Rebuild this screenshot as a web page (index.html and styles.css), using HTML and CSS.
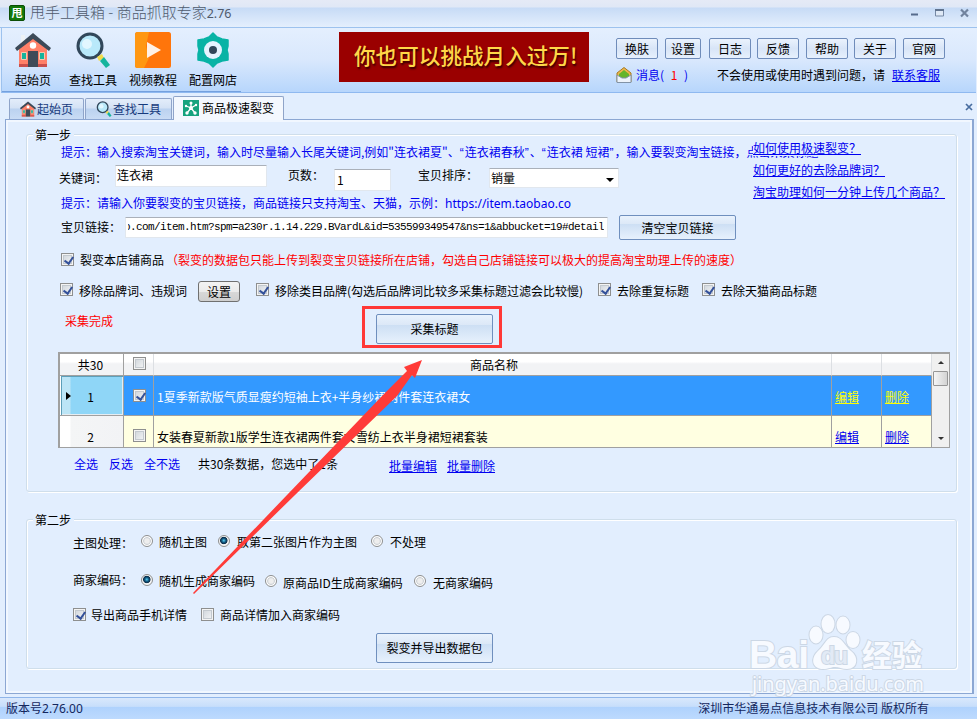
FILE: index.html
```html
<!DOCTYPE html>
<html lang="zh-CN">
<head>
    <meta charset="UTF-8">
    <title>甩手工具箱 - 商品抓取专家2.76</title>
    <link rel="stylesheet" href="styles.css">
</head>
<body>
    <!-- Iconos compartidos -->
    <svg class="defs">
        <symbol id="home" viewBox="0 0 36 36">
            <path d="M6 3h4v8H6z" fill="#eef2f5"/>
            <path d="M4 17 18 4l14 13v18H4z" fill="#ff8068"/>
            <path d="M18 1 0 16l2 3L18 7l16 12 2-3z" fill="#3c4a58"/>
            <circle cx="18" cy="13.500" r="3.200" fill="#fff"/>
            <path d="M13 19h10v16H13z" fill="#3f4b58"/>
            <path d="M6.500 20.500h5v7h-5zM24.500 20.500h5v7h-5z" fill="#15b39c" stroke="#f4c8ae"/>
            <path d="M4 32h9v3H4zM23 32h9v3h-9z" fill="#c94f4c"/>
        </symbol>
        <symbol id="search" viewBox="0 0 36 36">
            <circle cx="15" cy="14" r="12" fill="#b9e9fa" stroke="#31475a" stroke-width="3"/>
            <circle cx="12" cy="12" r="5" fill="#e2f7ff"/>
            <path d="m22 25 5-3 2 4-5 3z" fill="#f3dc4b"/>
            <path d="m25 29 4-4 6 8-4 3z" fill="#16b49e"/>
        </symbol>
    </svg>

    <div class="titlebar">
        <span class="logo">甩</span>
        <span class="title">甩手工具箱 - 商品抓取专家<small>2.76</small></span>
        <svg class="win-buttons" viewBox="0 0 60 12" width="60" height="12">
            <path d="M0 7.500h7" stroke="#566b8c" stroke-width="2"/>
            <path d="M24.500 3h8v6h-8z" fill="#dfe9f6" stroke="#7689a5"/>
            <path d="M24 3h9" stroke="#61748f" stroke-width="2"/>
            <path d="m50 2.500 7 7m0-7-7 7" stroke="#71839e" stroke-width="2.200"/>
        </svg>
    </div>

    <div class="header">
        <div class="tools">
            <div class="tool"><svg width="36" height="36"><use href="#home"/></svg><span>起始页</span></div>
            <div class="tool"><svg width="36" height="36"><use href="#search"/></svg><span>查找工具</span></div>
            <div class="tool">
                <svg viewBox="0 0 36 36" width="36" height="36">
                    <rect width="36" height="36" rx="2.500" fill="#ff750b"/>
                    <path d="M2.500 0H14l-3 14 3 12-5 10H2.500Q0 36 0 33V3Q0 0 2.500 0z" fill="#ff9712"/>
                    <path d="m12 10 14 8-14 8z" fill="#fff1e6"/>
                </svg><span>视频教程</span>
            </div>
            <div class="tool">
                <svg viewBox="0 0 36 36" width="36" height="36">
                    <path d="M18 1 22 5 27 7 33 8 33 14 32 18 33 22 33 28 27 29 22 31 18 35 14 31 9 29 3 28 3 22 4 18 3 14 3 8 9 7 14 5z" fill="#08b3a5" stroke="#08b3a5" stroke-width="1.500" stroke-linejoin="round"/>
                    <circle cx="18" cy="18" r="9" fill="#e5f3ff"/>
                    <circle cx="18" cy="18" r="4" fill="#31475a"/>
                </svg><span>配置网店</span>
            </div>
        </div>
        <div class="banner">你也可以挑战月入过万!</div>
        <div class="header-right">
            <div class="menu">
                <button>换肤</button><button class="narrow">设置</button><button>日志</button><button>反馈</button><button>帮助</button><button>关于</button><button>官网</button>
            </div>
            <div class="messages">
                <svg viewBox="0 0 16 16" width="16" height="16">
                    <path d="M8 .5 15 6v9H1V6z" fill="#efb64b" stroke="#a47b24"/>
                    <path d="M8 3 3 7v4h10V7z" fill="#64b52a"/>
                    <path d="m1 8 5 3h4l5-3v7.500H1z" fill="#edf3fa" stroke="#8293a6"/>
                </svg>
                <span class="msg">消息( <i>1</i> )</span>
                <span class="help">不会使用或使用时遇到问题，请</span>
                <a href="#">联系客服</a>
            </div>
        </div>
    </div>

    <div class="tabs">
        <div class="tab"><svg width="16" height="16"><use href="#home"/></svg>起始页</div>
        <div class="tab second"><svg width="16" height="16"><use href="#search"/></svg>查找工具</div>
        <div class="tab active">
            <svg viewBox="0 0 16 16" width="16" height="16">
                <rect width="16" height="16" fill="#16a37d"/>
                <path d="M8 8V3M8 8 3 6m5 2 5-3M8 8l-4 5m4-5 4 5" stroke="#fff" stroke-width="1.300"/>
                <g fill="#fff"><circle cx="8" cy="8" r="2"/><circle cx="8" cy="3" r="1.500"/><circle cx="3" cy="6" r="1.200"/><circle cx="13" cy="5" r="1.200"/><circle cx="4" cy="13" r="1.700"/><circle cx="12" cy="13" r="1.700"/></g>
            </svg>商品极速裂变
        </div>
        <svg class="tab-close" viewBox="0 0 8 8" width="8" height="8"><path d="m1 1 6 6m0-6L1 7" stroke="#486d9f" stroke-width="1.700"/></svg>
    </div>

    <div class="panel">
        <div class="group step1">
            <div class="legend">第一步</div>
            <div class="tip tip1">提示：输入搜索淘宝关键词，输入时尽量输入长尾关键词,例如"连衣裙夏"、<q>“</q>连衣裙春秋<q>”</q>、<q>“</q>连衣裙 短裙<q>”</q>，输入要裂变淘宝链接，点击采集标题</div>
            <div class="row keyword">
                <label>关键词：</label><input class="kw" value="连衣裙">
                <label>页数：</label><input class="pages" value="1">
                <label>宝贝排序：</label><div class="select">销量<b></b></div>
            </div>
            <div class="tip">提示：请输入你要裂变的宝贝链接，商品链接只支持淘宝、天猫，示例：<span class="url">https://item.taobao.co</span></div>
            <div class="row link">
                <label>宝贝链接：</label>
                <div class="link-input"><span>o.com/item.htm?spm=a230r.1.14.229.BVardL&amp;id=535599349547&amp;ns=1&amp;abbucket=19#detail</span></div>
                <button class="btn">清空宝贝链接</button>
            </div>
            <div class="row shop">
                <i class="check on"></i><span>裂变本店铺商品</span>
                <span class="red">（裂变的数据包只能上传到裂变宝贝链接所在店铺，勾选自己店铺链接可以极大的提高淘宝助理上传的速度）</span>
            </div>
            <div class="row filters">
                <i class="check on"></i><span>移除品牌词、违规词</span><button class="gray">设置</button>
                <i class="check on"></i><span>移除类目品牌(勾选后品牌词比较多采集标题过滤会比较慢)</span>
                <i class="check on"></i><span>去除重复标题</span>
                <i class="check on"></i><span>去除天猫商品标题</span>
            </div>
            <div class="row collect">
                <span class="red">采集完成</span>
                <div class="highlight"><button class="btn">采集标题</button></div>
            </div>
            <div class="grid">
                <div class="cells">
                    <div class="tr head"><div class="num">共30</div><div><i class="check"></i></div><div class="name">商品名称</div><div></div><div></div></div>
                    <div class="tr selected"><div class="num">1</div><div><i class="check on"></i></div><div class="name">1夏季新款版气质显瘦约短袖上衣+半身纱裙两件套连衣裙女</div><div><a href="#">编辑</a></div><div><a href="#">删除</a></div></div>
                    <div class="tr"><div class="num">2</div><div><i class="check"></i></div><div class="name">女装春夏新款1版学生连衣裙两件套女雪纺上衣半身裙短裙套装</div><div><a href="#">编辑</a></div><div><a href="#">删除</a></div></div>
                </div>
                <div class="scroll"><b class="up"></b><div class="thumb"></div><b class="down"></b></div>
            </div>
            <div class="row bulk">
                <span class="blue">全选</span><span class="blue">反选</span><span class="blue">全不选</span>
                <span>共30条数据，您选中了1条</span>
                <a href="#">批量编辑</a><a href="#">批量删除</a>
            </div>
            <div class="faq">
                <a href="#">如何使用极速裂变？</a>
                <a href="#">如何更好的去除品牌词？</a>
                <a href="#">淘宝助理如何一分钟上传几个商品？</a>
            </div>
        </div>

        <div class="group step2">
            <div class="legend">第二步</div>
            <div class="row images">
                <label>主图处理：</label>
                <i class="radio"></i><span>随机主图</span><i class="radio on"></i><span>取第二张图片作为主图</span><i class="radio"></i><span>不处理</span>
            </div>
            <div class="row codes">
                <label>商家编码：</label>
                <i class="radio on"></i><span>随机生成商家编码</span><i class="radio lower"></i><span class="lower">原商品ID生成商家编码</span><i class="radio lower"></i><span class="lower">无商家编码</span>
            </div>
            <div class="row export">
                <i class="check on"></i><span>导出商品手机详情</span><i class="check"></i><span>商品详情加入商家编码</span>
            </div>
            <button class="btn">裂变并导出数据包</button>
        </div>
    </div>

    <div class="status"><span>版本号<em>2.76.00</em></span><span>深圳市华通易点信息技术有限公司 版权所有</span></div>

    <svg class="overlay" viewBox="0 0 977 719" width="977" height="719">
        <path d="M193 593 287 495 383 395 407 371 404 367 422 360 415 378 412 375 397 396 295 495 194 594z" fill="#ff3b38"/>
        <g class="watermark">
            <ellipse cx="816" cy="635" rx="6.500" ry="8.500"/>
            <ellipse cx="828" cy="624" rx="6.500" ry="9"/>
            <ellipse cx="843" cy="625" rx="6.500" ry="8.500"/>
            <ellipse cx="853" cy="640" rx="6.500" ry="8"/>
            <path d="M834 637c-8 0-9 8-15 13-10 9-6 19 4 19 6 0 8-2 12-2s7 2 12 2c11 0 12-12 4-18-7-6-9-14-17-14z"/>
            <text x="749" y="668" class="bai" textLength="60">Bai</text>
            <text x="821" y="664" class="du" textLength="27">du</text>
            <text x="862" y="666" class="jy" textLength="60">经验</text>
            <text x="752" y="691" class="site" textLength="172">jingyan.baidu.com</text>
        </g>
    </svg>
</body>
</html>
```
FILE: styles.css
```css
* {
    box-sizing: border-box;
}
body {
    margin: 0;
    width: 977px;
    height: 719px;
    overflow: hidden;
    position: relative;
    font-family: "Noto Sans CJK SC", sans-serif;
    font-size: 12px;
    line-height: 16px;
    color: #000;
    background: #e2eefe;
    white-space: nowrap;
}
i, em {
    font-style: normal;
}
a {
    color: #0000f0;
    text-underline-offset: 1px;
}
button, input {
    font: inherit;
    color: #000;
    padding: 0;
    margin: 0;
}
.defs {
    position: absolute;
    width: 0;
    height: 0;
}

/* Barra de título */
.titlebar {
    height: 28px;
    display: flex;
    align-items: center;
    padding: 0 6px 2px 9px;
    background: linear-gradient(#e5eaf6 0, #e0e8f6 7px, #c7dbf6 8px, #e4effd 27px);
    border-bottom: 1px solid #9dc2ee;
}
.logo {
    width: 16px;
    height: 16px;
    background: #14790c;
    border: 1px solid #0b4e06;
    border-radius: 2px;
    color: #fff;
    font-size: 11px;
    font-weight: bold;
    line-height: 13px;
    text-align: center;
}
.title {
    margin-left: 5px;
    font-size: 15px;
    font-weight: 300;
    color: #4f5a6c;
}
.title small {
    font-family: "Noto Sans", sans-serif;
    font-size: 12.500px;
    font-weight: 400;
}
.win-buttons {
    margin-left: auto;
}

/* Cabecera */
.header {
    height: 65px;
    display: flex;
    margin: 0 1px;
    border-left: 1px solid #9dc2ee;
    border-bottom: 1px solid #8fb9f0;
    background: linear-gradient(#e4effe, #d9e8fd 50%, #b7d6fc);
}
.tools {
    display: flex;
    width: 239px;
    border-bottom: 1px solid #74a0dd;
}
.tool {
    flex: none;
    width: 60px;
    padding-top: 4px;
    display: flex;
    flex-direction: column;
    align-items: center;
}
.tool:first-child {
    margin-left: 1px;
}
.tool span {
    margin-top: 4px;
}
.banner {
    width: 250px;
    height: 50px;
    margin: 4px 0 0 98px;
    background: #9a0000;
    color: #ffd748;
    font-size: 21.600px;
    font-weight: 500;
    line-height: 46px;
    padding-left: 15px;
    text-shadow: 1px 2px 2px #300;
}
.header-right {
    margin-left: 27px;
    padding-top: 10px;
}
.menu {
    display: flex;
    gap: 7px;
}
.menu button {
    width: 42px;
    height: 21px;
    border: 1px solid #6f8cba;
    border-radius: 2px;
    background: linear-gradient(#eaf2fd, #d8e5f7 50%, #e6f0fd);
}
.menu .narrow {
    width: 36px;
}
.menu button:nth-child(3) {
    margin-left: 1px;
}
.menu button:nth-child(4), .menu button:nth-child(6) {
    margin-left: -1px;
}
.messages {
    display: flex;
    margin-top: 8px;
}
.msg {
    width: 81px;
    margin-left: 4px;
    color: #0000f0;
    word-spacing: 4px;
}
.msg i {
    color: #f00;
}
.help {
    width: 175px;
}

/* Pestañas */
.tabs {
    height: 26px;
    padding: 3px 4px 0 9px;
    display: flex;
    align-items: flex-end;
}
.tab {
    height: 21px;
    width: 75px;
    padding: 2px 0 0 10px;
    display: flex;
    gap: 1px;
    color: #173a7c;
    border: 1px solid #8fa4c9;
    border-bottom: 0;
    border-radius: 2px 2px 0 0;
    background: linear-gradient(#e3edfa, #d4e2f5 45%, #bbd2f0 50%, #c9dcf5);
}
.tab.second {
    width: 87px;
    margin-left: 1px;
}
.tab.active {
    width: 111px;
    height: 24px;
    padding: 3px 0 0 9px;
    margin-left: 1px;
    margin-bottom: -1px;
    position: relative;
    color: #000;
    background: #f4f8fe;
    gap: 3px;
}
.tab-close {
    margin: 0 0 8px auto;
}

/* Panel principal */
.panel {
    margin: 0 3px 0 5px;
    height: 575px;
    border: 1px solid #8ca7d3;
    border-right-width: 2px;
    box-shadow: inset 0 0 0 2px #f1f7ff;
    padding: 14px 0 0 20px;
}
.group {
    position: relative;
    width: 931px;
    border: 1px solid #cfdeeb;
    border-radius: 3px;
    box-shadow: 1px 1px #fff, inset 1px 1px #fff;
}
.legend {
    position: absolute;
    left: 6px;
    top: -8px;
    padding: 0 3px 0 2px;
    background: #e2eefe;
}
.row {
    display: grid;
    align-items: start;
}
.red {
    color: #f00;
}
.blue, .tip {
    color: #0000f0;
}
.tip {
    padding-left: 34px;
    height: 16px;
}
.tip q {
    quotes: none;
    font-family: "Liberation Sans", sans-serif;
    display: inline-block;
    width: 5px;
}
.url {
    font-family: "Noto Sans", sans-serif;
}
.step1 {
    height: 358px;
    padding-top: 9px;
}
.keyword {
    height: 35px;
    padding: 5px 0 0 32px;
    grid-template-columns: 56px 173px 46px 84px 71px 130px;
}
.keyword label {
    margin-top: 2px;
}
.keyword label:first-child {
    margin-top: 5px;
}
input, .select, .link-input {
    border: 1px solid #e1e7ee;
    border-top-color: #aab0b9;
    border-radius: 1px;
    background: #fff;
}
.kw {
    width: 152px;
    height: 22px;
    padding: 0 0 4px 1px;
}
.pages {
    width: 57px;
    height: 22px;
    margin-top: 4px;
    padding: 0 0 2px 2px;
}
.select {
    height: 20px;
    margin-top: 3px;
    padding: 1px 4px 0 1px;
    display: flex;
    justify-content: space-between;
}
.select b, .scroll b {
    border: 4px solid transparent;
    border-top-color: #000;
    border-bottom: 0;
    height: 4px;
    margin-top: 8px;
}
.link {
    height: 33px;
    padding: 4px 0 0 34px;
    grid-template-columns: 64px 494px 117px;
}
.link label {
    margin-top: 4px;
}
.link-input {
    width: 483px;
    height: 21px;
    margin-top: 2px;
    padding: 1px 3px 1px 2px;
}
.link-input span {
    display: flex;
    justify-content: flex-end;
    overflow: hidden;
    font-family: "Liberation Mono", monospace;
    font-size: 11px;
    letter-spacing: -0.600px;
}
.btn {
    width: 117px;
    height: 30px;
    border: 1px solid #6f8fbe;
    border-radius: 2px;
    background: linear-gradient(#e9f2fd, #dce8f7 35%, #cddff4 36%, #e7f1fd);
}
.link .btn {
    height: 25px;
}
.check {
    display: block;
    position: relative;
    width: 13px;
    height: 13px;
    border: 1px solid #8e8f8f;
    background: linear-gradient(135deg, #ccd2d8, #f7f8f9);
    box-shadow: inset 0 0 0 1px #f4f4f4, inset 0 0 0 2px #c3c9cf;
}
.check.on::after {
    content: "";
    position: absolute;
    left: 4px;
    top: 1px;
    width: 4px;
    height: 7px;
    border: solid #34519a;
    border-width: 0 2px 2px 0;
    transform: rotate(35deg);
}
.row > .check {
    margin-top: 1px;
}
.shop {
    height: 30px;
    padding: 8px 0 0 34px;
    grid-template-columns: 19px 86px auto;
}
.filters {
    height: 31px;
    padding: 7px 0 0 33px;
    grid-template-columns: 19px 119px 58px 19px 323px 19px 85px 19px auto;
}
.filters > span {
    margin-top: 2px;
}
.row.filters > .check {
    margin-top: 2px;
}
.gray {
    width: 42px;
    height: 21px;
    border: 1px solid #707070;
    border-radius: 3px;
    background: linear-gradient(#f3f3f3, #ebebeb 50%, #d8d8d8 51%, #cfcfcf);
}
.collect {
    height: 47px;
    padding: 1px 0 0 38px;
    grid-template-columns: 297px 140px;
}
.collect .red {
    margin-top: 7px;
}
.highlight {
    height: 42px;
    border: 3px solid #ff3837;
    padding: 5px 0 0 11px;
}
.highlight .btn {
    display: block;
}

/* Tabla de productos */
.grid {
    display: flex;
    margin-left: 31px;
    width: 892px;
    height: 96px;
    border: 1px solid #a0a0a0;
    border-top-width: 2px;
    border-left-width: 2px;
    overflow: hidden;
}
.cells {
    width: 872px;
}
.tr {
    display: grid;
    grid-template-columns: 64px 30px 678px 50px 50px;
    height: 40px;
    background: #ffffe1;
}
.tr > div {
    border-right: 1px solid #a0a0a0;
    border-bottom: 1px solid #a0a0a0;
    padding: 13px 0 0 3px;
}
.tr .check {
    margin-left: 6px;
}
.tr > .num {
    padding-right: 2px;
    padding-left: 0;
    text-align: center;
    background: linear-gradient(90deg, #fff 10px, #f4f5f6 11px, #f2f3f5);
}
.tr.head {
    height: 22px;
    background: linear-gradient(#fff 35%, #f2f3f5 45%);
}
.tr.head > div {
    padding-top: 3px;
    border-right-color: #dcdfe3;
}
.tr.head > .num {
    border-right-color: #a0a0a0;
    background: none;
}
.head .name {
    text-align: center;
}
.tr.selected {
    background: #3399ff;
    color: #fff;
}
.tr.selected .num {
    position: relative;
    color: #000;
    background: linear-gradient(90deg, #bce5f6 10px, #8fd6f7 11px);
    box-shadow: inset 1px 0 #fff, inset 2px 1px #5d9fb9, inset -1px -1px #e6edf2;
}
.selected .num::before {
    content: "";
    position: absolute;
    left: 6px;
    top: 16px;
    border: 4px solid transparent;
    border-left: 5px solid #000;
    border-right: 0;
}
.selected a {
    color: #ff0;
}
.scroll {
    width: 17px;
    background: #f0f0f0;
    display: flex;
    flex-direction: column;
    align-items: center;
}
.thumb {
    width: 15px;
    height: 15px;
    margin-top: 7px;
    border: 1px solid #969696;
    border-radius: 1px;
    background: linear-gradient(90deg, #f5f5f5, #d3d3d3);
}
.scroll b {
    border-width: 3px 3px 0;
    border-top-color: #333;
    height: 3px;
}
.scroll .up {
    margin-top: 7px;
    transform: rotate(180deg);
}
.scroll .down {
    margin: auto 0 7px;
}
.bulk {
    padding: 8px 0 0 47px;
    grid-template-columns: 35px 35px 54px 191px 58px 60px;
}
.bulk a {
    margin-top: 2px;
}
.faq {
    position: absolute;
    left: 726px;
    top: 5px;
    display: flex;
    flex-direction: column;
    align-items: flex-start;
    gap: 6px;
}
.faq a {
    background: #e2eefe;
}

.step2 {
    margin-top: 27px;
    height: 150px;
    padding-top: 14px;
}
.images, .codes {
    padding-left: 46px;
    height: 38px;
    grid-template-columns: 68px 18px 59px 19px 134px 19px auto;
}
.codes {
    padding-top: 1px;
    grid-template-columns: 68px 18px 106px 18px 131px 19px auto;
}
.images label {
    margin-top: 1px;
}
.codes label {
    margin-top: -1px;
}
.codes .lower {
    margin-top: 2px;
}
.radio {
    width: 12px;
    height: 12px;
    margin-top: 1px;
    border: 1px solid #8e8f8f;
    border-radius: 50%;
    background: radial-gradient(#eee 30%, #d0d4d8 50%, #fff 60%);
}
.radio.on {
    background: radial-gradient(circle at 48% 45%, #5bd0f2 0, #125c86 25%, #0b2c47 44%, #f4f4f4 54%);
}
.codes .radio.lower {
    margin-top: 2px;
}
.export {
    height: 37px;
    padding-left: 46px;
    margin-top: -3px;
    grid-template-columns: 18px 110px 19px auto;
}
.step2 > .btn {
    display: block;
    margin: -11px 0 0 349px;
}

.status {
    height: 22px;
    margin-top: 3px;
    padding: 2px 48px 0 6px;
    display: flex;
    justify-content: space-between;
    color: #14275e;
    border-top: 1px solid #8fb5e9;
    background: linear-gradient(#d9e8fc, #c7defb 40%, #afd2fd 45%, #bddafe);
}
.status em {
    font-family: "Noto Sans", sans-serif;
}

/* Flecha y marca de agua */
.overlay {
    position: absolute;
    left: 0;
    top: 0;
    pointer-events: none;
}
.watermark {
    fill: #f7faff;
    stroke: #ccd7e5;
    stroke-width: 2px;
    paint-order: stroke;
    font-family: "Liberation Sans", sans-serif;
}
.bai {
    font-size: 39px;
    font-weight: bold;
}
.du {
    font-size: 23px;
    font-weight: bold;
    fill: #e2eaf5;
}
.jy {
    font-family: "Noto Sans CJK SC", sans-serif;
    font-size: 30px;
    font-weight: bold;
}
.site {
    font-family: "Noto Sans", sans-serif;
    font-size: 20px;
}
```
